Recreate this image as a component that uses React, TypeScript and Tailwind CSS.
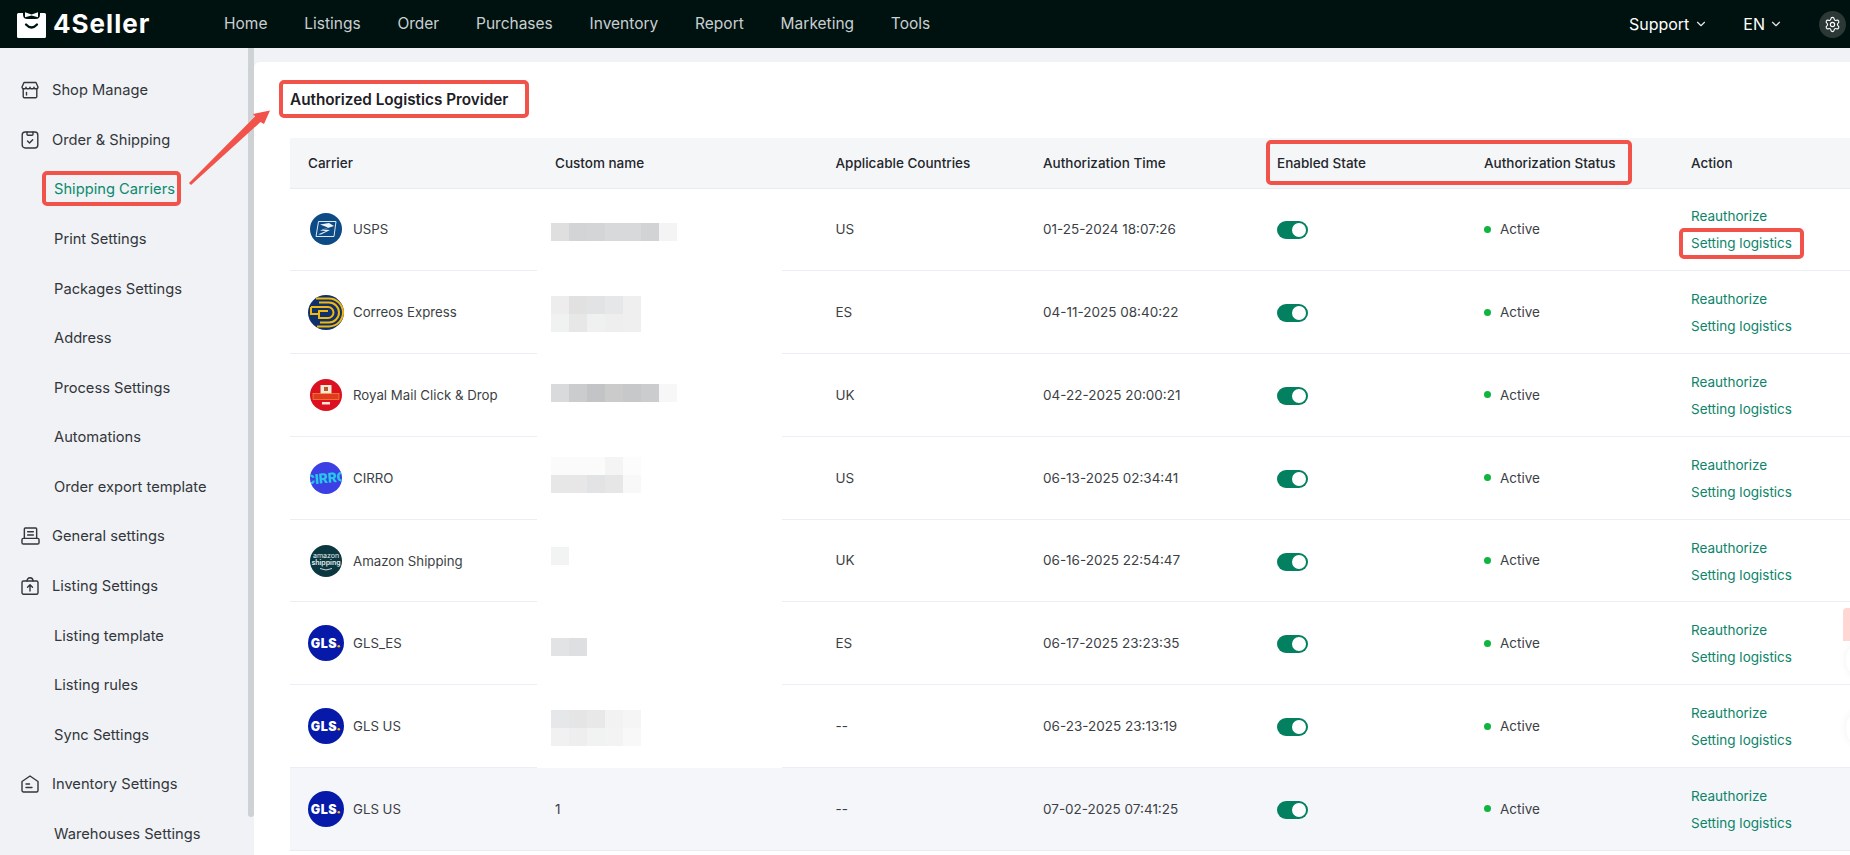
import React from "react";
import { ChevronDown, Settings } from "lucide-react";

const NAV = ["Home", "Listings", "Order", "Purchases", "Inventory", "Report", "Marketing", "Tools"];

const ic = "w-[18px] h-[18px] shrink-0 text-[#33363b]";

function ShopIcon() {
  return (
    <svg viewBox="0 0 18 18" fill="none" stroke="currentColor" strokeWidth="1.4" strokeLinejoin="round" strokeLinecap="round" className={ic}>
      <path d="M3 1.5h12l2 4.5c0 1.2-1 1.8-2 1.8s-2-.6-2-1.6c0 1-1.2 1.6-2 1.6S9 7.200 9 6.200c0 1-1.200 1.600-2 1.600s-2-.6-2-1.600c0 1-1 1.600-2 1.600S1 7.200 1 6z" />
      <path d="M2.200 8v7.500a1.200 1.200 0 0 0 1.200 1.200h11.200a1.200 1.200 0 0 0 1.200-1.200V8" />
      <path d="M5.500 11.500v2.500" />
    </svg>
  );
}
function OrderIcon() {
  return (
    <svg viewBox="0 0 18 18" fill="none" stroke="currentColor" strokeWidth="1.4" strokeLinejoin="round" strokeLinecap="round" className={ic}>
      <rect x="1.200" y="1" width="15.600" height="16" rx="3" />
      <path d="M6 1v2.200a1 1 0 0 0 1 1h4a1 1 0 0 0 1-1V1" />
      <path d="M6.500 10l2 2 3.200-3.200" />
    </svg>
  );
}
function GeneralIcon() {
  return (
    <svg viewBox="0 0 20 19" fill="none" stroke="currentColor" strokeWidth="1.5" strokeLinejoin="round" strokeLinecap="round" className="w-[19px] h-[18px] shrink-0 text-[#33363b]">
      <path d="M3.500 12V2a1 1 0 0 1 1-1h11a1 1 0 0 1 1 1v10" />
      <path d="M7 5h6M7 8.500h6" />
      <rect x="1" y="12" width="18" height="6" rx="1.500" />
    </svg>
  );
}
function ListingIcon() {
  return (
    <svg viewBox="0 0 18 18" fill="none" stroke="currentColor" strokeWidth="1.4" strokeLinejoin="round" strokeLinecap="round" className={ic}>
      <rect x="1" y="4" width="16" height="13.300" rx="1.500" />
      <path d="M6 4c0-2 1.200-3.200 3-3.200S12 2 12 4" />
      <path d="M9 14V8M6.500 10.300L9 7.800l2.500 2.500" />
    </svg>
  );
}
function InventoryIcon() {
  return (
    <svg viewBox="0 0 18 18" fill="none" stroke="currentColor" strokeWidth="1.4" strokeLinejoin="round" strokeLinecap="round" className={ic}>
      <path d="M1 6.500L9 1l8 5.500v9a1.500 1.500 0 0 1-1.500 1.500h-13A1.500 1.500 0 0 1 1 15.500z" />
      <path d="M5 9h3.500M5 12.500h6" />
    </svg>
  );
}

const SIDE: { label: string; icon?: React.ReactNode; active?: boolean }[] = [
  { label: "Shop Manage", icon: <ShopIcon /> },
  { label: "Order & Shipping", icon: <OrderIcon /> },
  { label: "Shipping Carriers", active: true },
  { label: "Print Settings" },
  { label: "Packages Settings" },
  { label: "Address" },
  { label: "Process Settings" },
  { label: "Automations" },
  { label: "Order export template" },
  { label: "General settings", icon: <GeneralIcon /> },
  { label: "Listing Settings", icon: <ListingIcon /> },
  { label: "Listing template" },
  { label: "Listing rules" },
  { label: "Sync Settings" },
  { label: "Inventory Settings", icon: <InventoryIcon /> },
  { label: "Warehouses Settings" },
];

function Usps() {
  return (
    <svg viewBox="0 0 32 32" className="w-8 h-8">
      <circle cx="16" cy="16" r="16" fill="#0d4b86" />
      <path d="M8.500 8.500H26L24 23.500H6z" fill="none" stroke="#dfe8f1" strokeWidth="1" />
      <path d="M10 11.500L19 10l5 3-11 3.500 7 .5-9 4.500H8l8-3.500-6-.5 8-3z" fill="#eef3f8" />
    </svg>
  );
}
function Correos() {
  return (
    <svg viewBox="0 0 36 35" className="w-9 h-[35px]">
      <ellipse cx="18" cy="17.500" rx="18" ry="17.500" fill="#10306c" />
      <g fill="none" stroke="#f0b70f" strokeWidth="2">
        <path d="M8 3.500h13a14 14 0 0 1 0 28H9" />
        <path d="M11 7.500h10a10 10 0 0 1 0 20H12" />
        <path d="M3 12h17a5.500 5.500 0 0 1 0 11H11v-7h9" />
        <path d="M3 12v7h8" />
      </g>
    </svg>
  );
}
function RoyalMail() {
  return (
    <svg viewBox="0 0 32 32" className="w-8 h-8">
      <circle cx="16" cy="16" r="16" fill="#db1020" />
      <rect x="10.500" y="6" width="11" height="9" fill="#f6ead9" />
      <rect x="14" y="8" width="4" height="4" fill="#b8582e" />
      <rect x="3" y="14.500" width="26" height="6" fill="#e23a1f" stroke="#f4a73b" strokeWidth="0.6" />
      <rect x="12" y="23" width="8" height="2.500" fill="#f6e3dc" />
    </svg>
  );
}
function Cirro() {
  return (
    <svg viewBox="0 0 32 32" className="w-8 h-8">
      <defs>
        <clipPath id="cirro-clip">
          <circle cx="16" cy="16" r="16" />
        </clipPath>
      </defs>
      <g clipPath="url(#cirro-clip)">
        <rect width="32" height="32" fill="#3c40e4" />
        <text x="16" y="21" textAnchor="middle" fontSize="13.500" fontWeight="800" fill="#27c8e8" transform="rotate(-5 16 16)">CIRRO</text>
      </g>
    </svg>
  );
}
function Amazon() {
  return (
    <svg viewBox="0 0 32 32" className="w-8 h-8">
      <circle cx="16" cy="16" r="16" fill="#0b3740" />
      <text x="16" y="13" textAnchor="middle" fontSize="7" fill="#e6eeee">amazon</text>
      <text x="16" y="20" textAnchor="middle" fontSize="7" fontWeight="600" fill="#e6eeee">shipping</text>
      <path d="M10 23.500q6 3 12 0" fill="none" stroke="#e6eeee" strokeWidth="0.9" />
    </svg>
  );
}
function Gls() {
  return (
    <svg viewBox="0 0 36 36" className="w-9 h-9">
      <circle cx="18" cy="18" r="18" fill="#0619a9" />
      <text x="16" y="22.500" textAnchor="middle" fontSize="12.500" fontWeight="900" letterSpacing="0.5" fill="#ffffff">GLS</text>
      <circle cx="30.800" cy="21.300" r="1.300" fill="#f4c20d" />
    </svg>
  );
}

type Row = {
  logo: React.ReactNode;
  name: string;
  blocks: string[][];
  offset: string;
  country: string;
  time: string;
};

const ROWS: Row[] = [
  {
    logo: <Usps />, name: "USPS", country: "US", time: "01-25-2024 18:07:26", offset: "mt-[6px]",
    blocks: [["bg-[#dfdfdf]", "bg-[#d3d4d6]", "bg-[#d4d5d7]", "bg-[#d8d9db]", "bg-[#d8d9db]", "bg-[#d2d3d5]", "bg-[#f4f4f4]"]],
  },
  {
    logo: <Correos />, name: "Correos Express", country: "ES", time: "04-11-2025 08:40:22", offset: "mt-[3px]",
    blocks: [
      ["bg-[#ededed]", "bg-[#e1e1e1]", "bg-[#e2e3e5]", "bg-[#e6e7e9]", "bg-[#efefef]"],
      ["bg-[#f0f1f1]", "bg-[#e7e7e7]", "bg-[#eff0f0]", "bg-[#eeeeee]", "bg-[#efefef]"],
    ],
  },
  {
    logo: <RoyalMail />, name: "Royal Mail Click & Drop", country: "UK", time: "04-22-2025 20:00:21", offset: "mb-[3px]",
    blocks: [["bg-[#d9dadc]", "bg-[#cbcccd]", "bg-[#c3c4c5]", "bg-[#cbcbcc]", "bg-[#c7c8ca]", "bg-[#cbcccd]", "bg-[#f7f7f7]"]],
  },
  {
    logo: <Cirro />, name: "CIRRO", country: "US", time: "06-13-2025 02:34:41", offset: "mb-[5px]",
    blocks: [
      ["bg-[#fbfbfb]", "bg-[#fbfbfb]", "bg-[#fbfbfb]", "bg-[#f4f4f4]", "bg-[#fcfcfc]"],
      ["bg-[#e7e7e7]", "bg-[#e7e7e7]", "bg-[#e2e3e5]", "bg-[#e6e6e6]", "bg-[#f8f8f8]"],
    ],
  },
  {
    logo: <Amazon />, name: "Amazon Shipping", country: "UK", time: "06-16-2025 22:54:47", offset: "mb-[9px]",
    blocks: [["bg-[#f2f3f3]"]],
  },
  {
    logo: <Gls />, name: "GLS_ES", country: "ES", time: "06-17-2025 23:23:35", offset: "mt-[7px]",
    blocks: [["bg-[#e2e3e5]", "bg-[#dedfe1]"]],
  },
  {
    logo: <Gls />, name: "GLS US", country: "--", time: "06-23-2025 23:13:19", offset: "mt-[4px]",
    blocks: [
      ["bg-[#e6e7e9]", "bg-[#e5e5e5]", "bg-[#e8e8e9]", "bg-[#f2f2f2]", "bg-[#f5f5f5]"],
      ["bg-[#f1f1f1]", "bg-[#eeeeee]", "bg-[#f1f2f2]", "bg-[#f3f3f3]", "bg-[#f8f8f8]"],
    ],
  },
];

const COLS = "grid grid-cols-[247px_280.5px_207.5px_234px_207px_207px_177px]";
const HEAD = ["Carrier", "Custom name", "Applicable Countries", "Authorization Time", "Enabled State", "Authorization Status", "Action"];

function Carrier({ logo, name }: { logo: React.ReactNode; name: string }) {
  return (
    <div className="pl-[18px] flex items-center">
      <div className="w-9 flex justify-center shrink-0">{logo}</div>
      <span className="ml-[9px] mt-[2px] text-[13.25px]">{name}</span>
    </div>
  );
}

function RestCells({ country, time }: { country: string; time: string }) {
  return (
    <>
      <div className="pl-[18px] flex items-center">{country}</div>
      <div className="pl-[18px] flex items-center">{time}</div>
      <div className="pl-[18px] pt-[2px] flex items-center">
        <div className="w-[31px] h-[18px] rounded-full bg-[#03805f] flex items-center justify-end pr-[2px]">
          <div className="w-[14px] h-[14px] rounded-full bg-white" />
        </div>
      </div>
      <div className="pl-[18px] flex items-center gap-[9px]">
        <span className="w-[7px] h-[7px] rounded-full bg-[#0fb53f]" />
        <span>Active</span>
      </div>
      <div className="pl-[18px] pt-[1px] flex flex-col justify-center gap-[7px] text-[#0b8469] leading-5">
        <span>Reauthorize</span>
        <span>Setting logistics</span>
      </div>
    </>
  );
}

function RedBox({ cls }: { cls: string }) {
  return <div className={`absolute border-[4px] border-[#f1534a] rounded-[5px] pointer-events-none ${cls}`} />;
}

export default function App() {
  return (
    <div className="relative w-[1850px] h-[855px] overflow-hidden flex flex-col font-['Inter',sans-serif] text-[13.5px] text-[#3c3f45]">
      <header className="h-12 shrink-0 bg-[#00120f] flex items-center">
        <div className="w-[224px] shrink-0 flex items-center pl-[17px]">
          <svg viewBox="0 0 29 27" className="w-[29px] h-[27px] shrink-0">
            <path d="M1.500 2H27.500a1.500 1.500 0 0 1 1.500 1.500V25.500a1.500 1.500 0 0 1-1.500 1.500H1.500A1.500 1.500 0 0 1 0 25.500V3.500A1.500 1.500 0 0 1 1.500 2z" fill="#ffffff" />
            <path d="M6 0H23V3.500Q23 8 18.500 8H10.500Q6 8 6 3.500z" fill="#00120f" />
            <path d="M8 1.200L14.500 3.500 21 1.200V6.200L14.500 4.500 8 6.200z" fill="#ffffff" />
            <path d="M9 13.500Q14.500 19.500 20 13.500" fill="none" stroke="#00120f" strokeWidth="2.300" strokeLinecap="round" />
          </svg>
          <span className="ml-[7px] text-[26px] font-bold text-white tracking-[1px] leading-none">4Seller</span>
        </div>
        <nav className="flex gap-[36.8px] text-[15.5px] text-[#c9cfd1]">
          {NAV.map((n) => (
            <span key={n}>{n}</span>
          ))}
        </nav>
        <div className="ml-auto flex items-center text-[16px] text-white pr-1">
          <span>Support</span>
          <ChevronDown size={14} className="ml-[5px] text-[#e5e7e7]" />
          <span className="ml-[35px]">EN</span>
          <ChevronDown size={14} className="ml-[4px] text-[#e5e7e7]" />
          <div className="ml-[36px] w-[27px] h-[27px] rounded-full bg-[#2c3836] flex items-center justify-center">
            <Settings size={17} className="text-white" strokeWidth={1.6} />
          </div>
        </div>
      </header>

      <div className="flex-1 flex min-h-0">
        <aside className="w-[254px] shrink-0 flex bg-[#f0f2f6] text-[14.7px]">
          <div className="w-[248px] pt-[17.5px]">
            {SIDE.map((s) => (
              <div key={s.label} className="h-[49.58px] flex items-center">
                {s.icon ? (
                  <div className="flex items-center pl-[21px]">
                    <div className="w-[31px] shrink-0">{s.icon}</div>
                    <span className="text-[#33363b]">{s.label}</span>
                  </div>
                ) : (
                  <span className={`pl-[54px] ${s.active ? "text-[#0a8a6c]" : "text-[#33363b]"}`}>{s.label}</span>
                )}
              </div>
            ))}
          </div>
          <div className="w-[6px]">
            <div className="h-[769px] bg-[#cfd2d5] rounded-b-[3px]" />
          </div>
        </aside>

        <main className="flex-1 min-w-0 bg-[#f0f2f5] pt-[14px]">
          <div className="h-full bg-white rounded-tl-[6px] pl-[36px] overflow-hidden">
            <div className="h-[76px] flex items-center text-[15.3px] font-semibold text-[#1d2025]">Authorized Logistics Provider</div>
            <div className="w-[1560px]">
              <div className={`${COLS} h-[50.5px] bg-[#f5f6f8] border-b border-[#e8ecf2] font-medium text-[#23262b]`}>
                {HEAD.map((h) => (
                  <div key={h} className="pl-[18px] flex items-center">{h}</div>
                ))}
              </div>
              {ROWS.map((r) => (
                <div key={r.time} className={`${COLS} h-[82.8px] border-b border-[#eceef5]`}>
                  <Carrier logo={r.logo} name={r.name} />
                  <div className="w-[245px] -mb-px border-b border-white pl-[14px] flex flex-col justify-center">
                    <div className={`flex flex-col ${r.offset}`}>
                      {r.blocks.map((line, i) => (
                        <div key={i} className="flex">
                          {line.map((c, j) => (
                            <div key={j} className={`w-[18px] h-[18px] ${c}`} />
                          ))}
                        </div>
                      ))}
                    </div>
                  </div>
                  <RestCells country={r.country} time={r.time} />
                </div>
              ))}
              <div className={`${COLS} h-[82.8px] bg-[#f5f6fa] border-b border-[#e9ecf3]`}>
                <Carrier logo={<Gls />} name="GLS US" />
                <div className="pl-[18px] flex items-center">1</div>
                <RestCells country="--" time="07-02-2025 07:41:25" />
              </div>
            </div>
          </div>
        </main>
      </div>

      <RedBox cls="left-[279px] top-[80px] w-[250px] h-[38px]" />
      <RedBox cls="left-[42px] top-[171px] w-[139px] h-[35px]" />
      <RedBox cls="left-[1266px] top-[140px] w-[366px] h-[45px]" />
      <RedBox cls="left-[1679px] top-[228px] w-[125px] h-[31px]" />

      <svg viewBox="0 0 1850 855" className="absolute inset-0 w-[1850px] h-[855px] pointer-events-none">
        <path d="M189 183L255 116.500 253 114 270 110.500 264 124 260.500 122 191 185z" fill="#f1534a" />
      </svg>

      <div className="absolute right-0 top-[608px] w-[7px] h-[33px] rounded-tl-[4px] bg-[#ffd6d3]" />
      <div className="absolute left-[1846px] top-[640px] w-10 h-10 rounded-full bg-white shadow-[0_0_8px_rgba(0,0,0,0.06)]" />
      <div className="absolute left-[1846px] top-[708px] w-10 h-10 rounded-full bg-white shadow-[0_0_8px_rgba(0,0,0,0.06)]" />
    </div>
  );
}
